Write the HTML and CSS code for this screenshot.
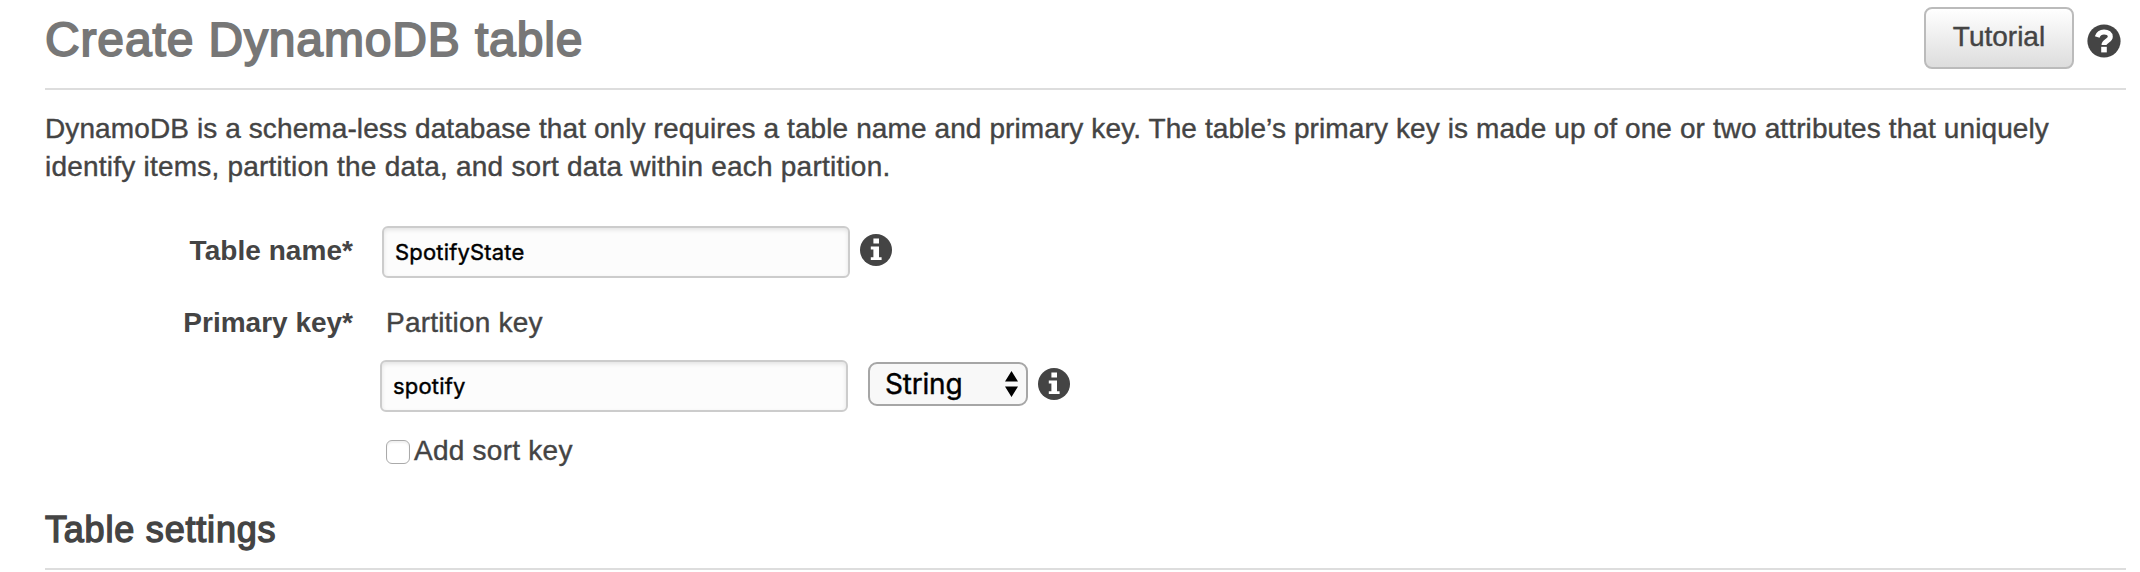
FILE: index.html
```
<!DOCTYPE html>
<html lang="en">
<head>
<meta charset="utf-8">
<title>Create DynamoDB table</title>
<link rel="stylesheet" href="styles.css">
</head>
<body>
<svg class="defs" aria-hidden="true">
  <symbol id="info" viewBox="0 0 32 32">
    <circle cx="16" cy="16" r="16" fill="#444"/>
    <path fill="#fff" d="M13.400 4.500h5.600v5h-5.600zM10.800 12.500h8.200v10.700h2.600V26H10.800v-2.800h2.600v-7.800h-2.600z"/>
  </symbol>
</svg>
<main class="page">
  <header class="header">
    <h1 class="title">Create DynamoDB table</h1>
    <button class="tutorial" type="button">Tutorial</button>
    <svg class="help" viewBox="0 0 34 34">
      <circle cx="17" cy="17" r="16.6" fill="#444"/>
      <path fill="none" stroke="#fff" stroke-width="5" d="M10.200 13C11.500 9.200 13.900 8 17 8c3.900 0 6.300 1.900 6.300 4.800 0 4.200-6.300 3.900-6.300 8.200"/>
      <path fill="#fff" d="M14.200 22.800h5.600v5.600h-5.600z"/>
    </svg>
  </header>
  <p class="intro"><span class="intro-a">DynamoDB is a schema-less database that only requires a table name and primary key. The table’s primary key is made up of one or two attributes that uniquely</span><br><span class="intro-b">identify items, partition the data, and sort data within each partition.</span></p>
  <form class="form">
    <div class="row row-name">
      <label class="label" for="table-name">Table name*</label>
      <input class="input" id="table-name" value="SpotifyState">
      <svg class="info"><use href="#info"/></svg>
    </div>
    <div class="row row-key">
      <span class="label">Primary key*</span>
      <span class="caption">Partition key</span>
    </div>
    <div class="row row-partition">
      <input class="input" value="spotify">
      <div class="select"><span>String</span>
        <svg class="arrows" viewBox="0 0 13 26"><path d="M6.500 0L13 10.500H0zM0 15.500h13L6.500 26z"/></svg>
      </div>
      <svg class="info"><use href="#info"/></svg>
    </div>
    <label class="row row-sort"><input class="check" type="checkbox"><span class="sort">Add sort key</span></label>
  </form>
  <h2 class="section">Table settings</h2>
</main>
</body>
</html>
```
FILE: styles.css
```
* { box-sizing: border-box; }
body {
  margin: 0;
  background: #fff;
  color: #444;
  font: 28px/38px "Liberation Sans", Arial, sans-serif;
  -webkit-text-stroke: 0.4px currentColor;
  overflow: hidden;
}
.defs { display: none; }
.page { padding: 0 14px 0 45px; height: 572px; }
.header {
  display: flex;
  align-items: flex-start;
  height: 90px;
  padding-top: 7px;
  border-bottom: 2px solid #ddd;
}
.title {
  flex: 1;
  margin: 0;
  padding-top: 5px;
  font-size: 48px;
  line-height: 56px;
  font-weight: 400;
  letter-spacing: 0.86px;
  color: #777;
  white-space: nowrap;
  -webkit-text-stroke: 1.8px #777;
}
.tutorial {
  width: 150px;
  height: 62px;
  padding: 0 0 2px;
  border: 2px solid #bbb;
  border-radius: 8px;
  background: linear-gradient(#fff, #ddd);
  color: #444;
  font: inherit;
  -webkit-text-stroke: inherit;
}
.help { width: 34px; height: 34px; margin: 17px 5px 0 13px; }
.intro { margin: 0; padding-top: 20px; white-space: nowrap; }
.intro-a { letter-spacing: 0.105px; }
.intro-b { letter-spacing: 0.22px; }
.form { padding-top: 40px; }
.row { display: flex; align-items: flex-start; }
.row-name { height: 78px; }
.row-key { height: 56px; }
.row-partition { height: 80px; padding-left: 335px; }
.row-sort { height: 24px; padding-left: 341px; align-items: center; }
.label {
  width: 308px;
  text-align: right;
  font-weight: 700;
  white-space: nowrap;
  -webkit-text-stroke: 0;
}
.row-name .label { padding-top: 6px; letter-spacing: 0.05px; }
.row-name .input { margin-left: 29px; }
.caption { margin-left: 33px; letter-spacing: 0.2px; }
.sort { padding-bottom: 3px; letter-spacing: 0.25px; }
.input {
  width: 468px;
  height: 52px;
  padding: 0 11px;
  border: 2px solid #ccc;
  border-radius: 6px;
  background: #fcfcfc;
  box-shadow: inset 0 2px 4px rgba(0, 0, 0, .1);
  color: #000;
  font: 22px Inter, sans-serif;
  letter-spacing: 0.17px;
  outline: 0;
}
.info { width: 32px; height: 32px; margin: 8px 0 0 10px; }
.select {
  display: flex;
  justify-content: space-between;
  align-items: center;
  width: 160px;
  height: 44px;
  margin: 2px 0 0 20px;
  padding: 0 8px 0 15px;
  border: 2px solid #a6a6a6;
  border-radius: 9px;
  background: #f8f8f8;
  color: #000;
  font: 28px Inter, sans-serif;
  letter-spacing: -0.2px;
}
.arrows { width: 13px; height: 26px; }
.check {
  appearance: none;
  width: 24px;
  height: 24px;
  margin: 0 4px 0 0;
  border: 1.5px solid #aaa;
  border-radius: 6px;
  background: #fff;
  box-shadow: inset 0 2px 2px rgba(0, 0, 0, .06);
}
.section {
  margin: 0;
  padding-top: 42px;
  height: 106px;
  border-bottom: 2px solid #ddd;
  font-size: 36px;
  line-height: 48px;
  font-weight: 400;
  letter-spacing: 0.8px;
  -webkit-text-stroke: 1.4px #444;
}
```
